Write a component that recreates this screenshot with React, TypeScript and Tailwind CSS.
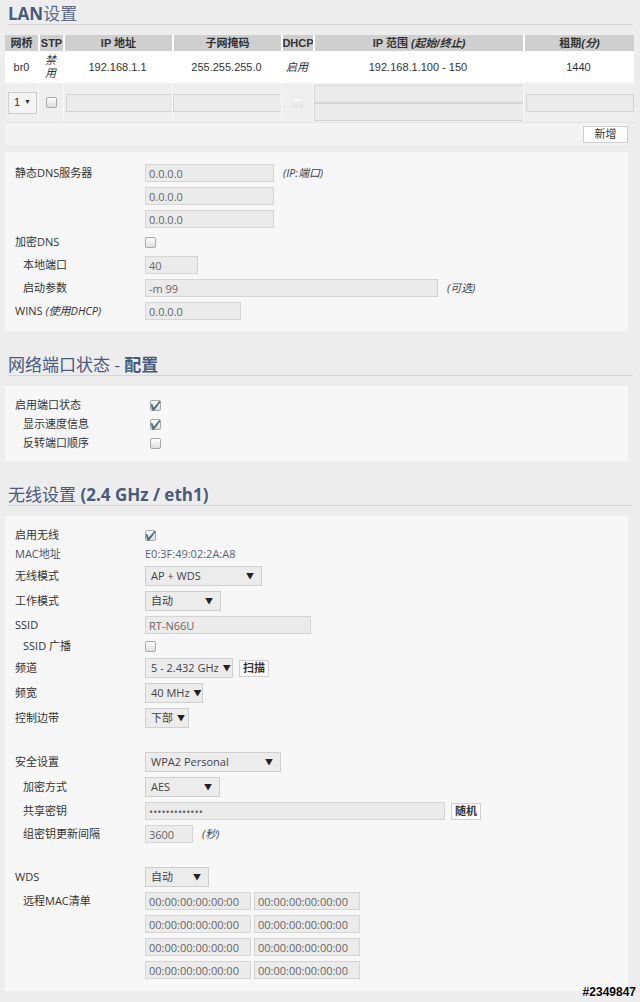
import React from 'react';

const sans = "font-['Open_Sans','Noto_Sans_CJK_SC',sans-serif]";
const arial = "font-['Liberation_Sans','Noto_Sans_CJK_SC',sans-serif]";

function Title({ light, bold }: { light: string; bold?: string }) {
  return (
    <h2
      className={`${sans} ml-[3px] h-[21px] w-[625px] border-b border-[#d6d6d6] text-[17px] leading-[20px] text-[#4a5a7c]`}
    >
      {light}
      {bold && <span className="font-bold">{bold}</span>}
    </h2>
  );
}

function LanTitle() {
  return (
    <h2
      className={`${sans} ml-[3px] h-[21px] w-[625px] border-b border-[#d6d6d6] text-[17px] leading-[20px] text-[#4a5a7c]`}
    >
      <span className="font-bold">LAN</span>
      <span className="text-[#5d6a88]">设置</span>
    </h2>
  );
}

function Field({ w, value, h = 18, className = '' }: { w: number; value: string; h?: number; className?: string }) {
  return (
    <input
      readOnly
      value={value}
      style={{ width: w, height: h }}
      className={`${sans} block shrink-0 border border-[#d5d5d5] bg-[#ebebeb] px-[3px] text-[11px] text-[#666] outline-none ${className}`}
    />
  );
}

function Select({ w, value }: { w: number; value: string }) {
  return (
    <div
      style={{ width: w }}
      className={`${sans} flex h-[20px] shrink-0 items-center justify-between gap-[4px] whitespace-nowrap border border-[#cfcfcf] bg-[#ececec] pl-[5px] pr-[7px] text-[11px] text-[#444]`}
    >
      <span>{value}</span>
      <span className="text-[8px] text-[#222]">▼</span>
    </div>
  );
}

function Check({ on, disabled }: { on?: boolean; disabled?: boolean }) {
  return (
    <span
      className={`flex h-[11px] w-[11px] shrink-0 items-center justify-center rounded-[2px] border bg-gradient-to-b from-white to-[#dedede] text-[9px] leading-none text-[#333] ${
        disabled ? 'border-[#e2e2e2] opacity-50' : 'border-[#a9a9a9]'
      }`}
    >
      {on ? '✔' : ''}
    </span>
  );
}

function Btn({ children }: { children: React.ReactNode }) {
  return (
    <span
      className={`${sans} flex h-[17px] items-center border border-[#cfcfcf] bg-white px-[3px] text-[11px] font-bold text-[#333]`}
    >
      {children}
    </span>
  );
}

function Row({
  label,
  indent,
  h = 18,
  children,
}: {
  label?: React.ReactNode;
  indent?: boolean;
  h?: number;
  children?: React.ReactNode;
}) {
  return (
    <div className="flex items-center" style={{ height: h }}>
      <div className={`${sans} w-[130px] shrink-0 text-[11px] leading-[14px] text-[#333] ${indent ? 'pl-[8px]' : ''}`}>
        {label}
      </div>
      <div className="flex items-center gap-[6px]">{children}</div>
    </div>
  );
}

function Note({ children }: { children: React.ReactNode }) {
  return <span className={`${sans} ml-[3px] text-[11px] leading-[14px] italic text-[#444]`}>{children}</span>;
}

function LanTable() {
  const cols = 'grid grid-cols-[33px_25px_109px_109px_32px_210px_111px]';
  const head = ['网桥', 'STP', 'IP 地址', '子网掩码', 'DHCP'];
  return (
    <div className="w-[623px] bg-[#f3f3f3]">
      <div className={`${arial} w-[629px] text-[11px] text-[#333]`}>
        <div className={`${cols} h-[16px] bg-[#cfcfcf] font-bold`}>
          {head.map((t, i) => (
            <div key={t} className={`flex items-center justify-center ${i ? 'border-l-2 border-white' : ''}`}>
              {t}
            </div>
          ))}
          <div className="flex items-center justify-center border-l-2 border-white">
            IP 范围&nbsp;<i>(起始/终止)</i>
          </div>
          <div className="flex items-center justify-center border-l-2 border-white">
            租期<i>(分)</i>
          </div>
        </div>
        <div className={`${cols} h-[32px] bg-white text-center`}>
          <div className="flex items-center justify-center">br0</div>
          <div className="flex flex-col items-center justify-center italic leading-[13px]">
            <span>禁</span>
            <span>用</span>
          </div>
          <div className="flex items-center justify-center">192.168.1.1</div>
          <div className="flex items-center justify-center">255.255.255.0</div>
          <div className="flex items-center justify-center italic">启用</div>
          <div className="flex items-center justify-center">192.168.1.100 - 150</div>
          <div className="flex items-center justify-center">1440</div>
        </div>
        <div className={`${cols} h-[40px] border-b border-[#e4e4e4] bg-[#efefef]`}>
          <div className="flex items-center pl-[3px]">
            <div className="flex h-[22px] w-[29px] items-center justify-between border border-[#cdcdcd] bg-[#f4f4f4] pl-[5px] pr-[5px] text-[11px]">
              <span>1</span>
              <span className="text-[7px]">▼</span>
            </div>
          </div>
          <div className="flex items-center justify-center border-l border-[#f8f8f8]">
            <Check />
          </div>
          <div className="flex items-center border-l border-[#f8f8f8] pl-[2px]">
            <Field w={108} value="" />
          </div>
          <div className="flex items-center border-l border-[#f8f8f8]">
            <Field w={109} value="" />
          </div>
          <div className="flex items-center justify-center border-l border-[#f8f8f8]">
            <Check disabled />
          </div>
          <div className="flex flex-col justify-center border-l border-[#f8f8f8]">
            <Field w={210} value="" />
            <Field w={210} value="" />
          </div>
          <div className="flex items-center border-l border-[#f8f8f8] pl-[2px]">
            <Field w={108} value="" />
          </div>
        </div>
      </div>
      <div className="flex h-[22px] items-center justify-end">
        <span
          className={`${sans} flex h-[17px] w-[45px] items-center justify-center border border-[#cfcfcf] bg-white text-[11px] text-[#333]`}
        >
          新增
        </span>
      </div>
    </div>
  );
}

function Panel({ children, className = '' }: { children: React.ReactNode; className?: string }) {
  return (
    <div className={`flex w-[623px] flex-col gap-[5px] bg-[#f7f7f7] pl-[10px] pt-[12px] ${className}`}>{children}</div>
  );
}

export default function App() {
  return (
    <div className="relative min-h-[1002px] w-[640px] overflow-hidden bg-[#ededed]">
      <div className="w-[640px] pl-[5px] pt-[4px]">
        <LanTitle />
        <div className="mt-[10px]">
          <LanTable />
        </div>

        <Panel className="mt-[7px] pb-[11px]">
          <Row label="静态DNS服务器">
            <Field w={129} value="0.0.0.0" />
            <Note>(IP:端口)</Note>
          </Row>
          <Row>
            <Field w={129} value="0.0.0.0" />
          </Row>
          <Row>
            <Field w={129} value="0.0.0.0" />
          </Row>
          <Row label="加密DNS">
            <Check />
          </Row>
          <Row label="本地端口" indent>
            <Field w={53} value="40" />
          </Row>
          <Row label="启动参数" indent>
            <Field w={293} value="-m 99" />
            <Note>(可选)</Note>
          </Row>
          <Row
            label={
              <>
                WINS <i>(使用DHCP)</i>
              </>
            }
          >
            <Field w={96} value="0.0.0.0" />
          </Row>
        </Panel>

        <div className="mt-[24px]">
          <Title light="网络端口状态 - " bold="配置" />
        </div>
        <Panel className="mt-[10px] pb-[11px]">
          <Row label="启用端口状态" h={14}>
            <span className="pl-[5px]">
              <Check on />
            </span>
          </Row>
          <Row label="显示速度信息" indent h={14}>
            <span className="pl-[5px]">
              <Check on />
            </span>
          </Row>
          <Row label="反转端口顺序" indent h={14}>
            <span className="pl-[5px]">
              <Check />
            </span>
          </Row>
        </Panel>

        <div className="mt-[24px]">
          <Title light="无线设置 " bold="(2.4 GHz / eth1)" />
        </div>
        <Panel className="mt-[10px] pb-[12px]">
          <Row label="启用无线" h={14}>
            <Check on />
          </Row>
          <Row label={<span className="text-[#4d5570]">MAC地址</span>} h={14}>
            <span className={`${sans} text-[11px] text-[#5b6275]`}>E0:3F:49:02:2A:A8</span>
          </Row>
          <Row label="无线模式" h={20}>
            <Select w={117} value="AP + WDS" />
          </Row>
          <Row label="工作模式" h={20}>
            <Select w={76} value="自动" />
          </Row>
          <Row label="SSID">
            <Field w={166} value="RT-N66U" className="text-[#444]" />
          </Row>
          <Row label="SSID 广播" indent h={14}>
            <Check />
          </Row>
          <Row label="频道" h={20}>
            <Select w={88} value="5 - 2.432 GHz" />
            <Btn>扫描</Btn>
          </Row>
          <Row label="频宽" h={20}>
            <Select w={58} value="40 MHz" />
          </Row>
          <Row label="控制边带" h={20}>
            <Select w={44} value="下部" />
          </Row>
          <div className="h-[14px]" />
          <Row label="安全设置" h={20}>
            <Select w={136} value="WPA2 Personal" />
          </Row>
          <Row label="加密方式" indent h={20}>
            <Select w={75} value="AES" />
          </Row>
          <Row label="共享密钥" indent>
            <Field w={300} value="•••••••••••••" className="text-[9px] text-[#333]" />
            <Btn>随机</Btn>
          </Row>
          <Row label="组密钥更新间隔" indent>
            <Field w={48} value="3600" />
            <Note>(秒)</Note>
          </Row>
          <div className="h-[14px]" />
          <Row label="WDS" h={20}>
            <Select w={64} value="自动" />
          </Row>
          {[0, 1, 2, 3].map((i) => (
            <Row key={i} label={i === 0 ? '远程MAC清单' : undefined} indent>
              <div className="flex gap-[3px]">
                <Field w={106} value="00:00:00:00:00:00" />
                <Field w={106} value="00:00:00:00:00:00" />
              </div>
            </Row>
          ))}
        </Panel>
      </div>
      <span
        className={`${arial} absolute bottom-[1px] right-[4px] text-[12px] font-bold text-black [text-shadow:0_0_2px_#fff,0_0_2px_#fff]`}
      >
        #2349847
      </span>
    </div>
  );
}
